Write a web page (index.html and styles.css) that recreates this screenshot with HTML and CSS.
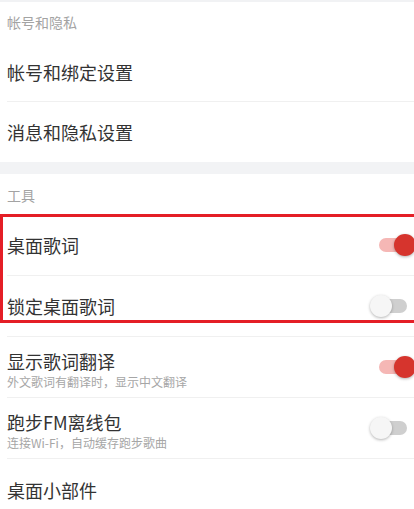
FILE: index.html
```html
<!DOCTYPE html>
<html lang="zh-CN">
<head>
<meta charset="utf-8">
<title>设置</title>
<link rel="stylesheet" href="styles.css">
</head>
<body>
<div class="page">
  <div class="topline"></div>
  <div class="group">
    <div class="header">帐号和隐私</div>
    <div class="row"><span class="title">帐号和绑定设置</span></div>
    <div class="row last"><span class="title">消息和隐私设置</span></div>
  </div>
  <div class="band"></div>
  <div class="group tools">
    <div class="header">工具</div>
    <div class="row">
      <span class="title">桌面歌词</span>
      <span class="switch on"><span class="track"></span><span class="knob"></span></span>
    </div>
    <div class="row">
      <span class="title">锁定桌面歌词</span>
      <span class="switch"><span class="track"></span><span class="knob"></span></span>
    </div>
    <div class="row">
      <div class="text">
        <div class="title">显示歌词翻译</div>
        <div class="sub">外文歌词有翻译时，显示中文翻译</div>
      </div>
      <span class="switch on"><span class="track"></span><span class="knob"></span></span>
    </div>
    <div class="row">
      <div class="text">
        <div class="title">跑步FM离线包</div>
        <div class="sub">连接Wi-Fi，自动缓存跑步歌曲</div>
      </div>
      <span class="switch"><span class="track"></span><span class="knob"></span></span>
    </div>
    <div class="row last"><span class="title">桌面小部件</span></div>
  </div>
  <div class="highlight"></div>
</div>
</body>
</html>
```
FILE: styles.css
```css
html, body {
  margin: 0;
  padding: 0;
  background: #fff;
  overflow: hidden;
}
body {
  font-family: "Noto Sans CJK SC", "Noto Sans", sans-serif;
  color: #333;
}
.page {
  position: relative;
  width: 100%;
  height: 509px;
  overflow: hidden;
}
.topline {
  height: 2px;
  background: #f1f2f4;
}
.header {
  height: 40px;
  display: flex;
  align-items: center;
  padding-left: 7px;
  font-size: 14px;
  color: #a3a3a3;
}
.tools .header {
  height: 41px;
}
.row {
  margin-left: 7px;
  height: 60px;
  box-sizing: border-box;
  border-bottom: 1px solid #f0f0f0;
  display: flex;
  align-items: center;
  justify-content: space-between;
}
.tools .row {
  height: 61px;
}
.row.last {
  border-bottom: none;
}
.title {
  font-size: 18px;
  line-height: 22px;
  color: #333;
}
.text {
  align-self: flex-start;
  padding-top: 13px;
}
.sub {
  font-size: 12px;
  line-height: 16px;
  color: #a6a6a6;
  margin-top: 2px;
}
.band {
  height: 12px;
  background: #f2f3f5;
}
.switch {
  position: relative;
  width: 46px;
  height: 24px;
  flex: none;
  margin-right: -2px;
}
.switch .track {
  position: absolute;
  left: 6px;
  right: 9px;
  top: 5px;
  height: 14px;
  border-radius: 7px;
  background: #cfcfcf;
}
.switch .knob {
  position: absolute;
  left: 0;
  top: 1px;
  width: 22px;
  height: 22px;
  border-radius: 50%;
  background: #f6f6f6;
  box-shadow: 0 1px 3px rgba(0, 0, 0, 0.3);
}
.switch.on .track {
  left: 9px;
  background: #f5b7b5;
}
.switch.on .knob {
  left: auto;
  right: 0;
  background: #d6342d;
}
.highlight {
  position: absolute;
  left: 0;
  right: 0;
  top: 214px;
  height: 109px;
  box-sizing: border-box;
  border: 3px solid #e41e26;
  border-right: none;
  pointer-events: none;
}
```
